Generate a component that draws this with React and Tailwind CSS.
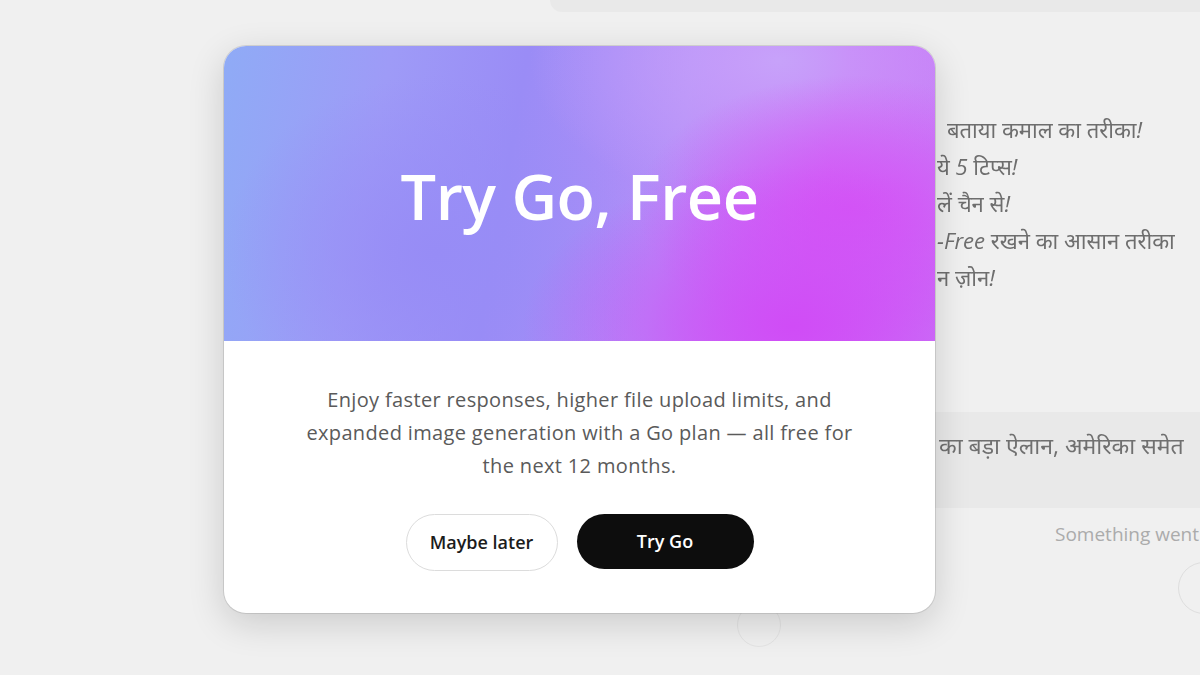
import { useState } from 'react';

const font = { fontFamily: '"Open Sans", "Noto Sans", sans-serif' };

const headlines = [
  { text: 'बताया कमाल का तरीका!', pad: 'pl-[12px]' },
  { text: 'ये 5 टिप्स!', pad: 'pl-[2px]' },
  { text: 'लें चैन से!', pad: 'pl-[2px]' },
  { text: '-Free रखने का आसान तरीका', pad: 'pl-[2px]' },
  { text: 'न ज़ोन!', pad: 'pl-[2px]' },
];

function BackgroundPage() {
  return (
    <div className="flex h-full w-full flex-col">
      <div className="ml-[550px] h-[12px] rounded-bl-[14px] bg-[#e9e9e9]" />
      <div className="flex flex-1">
        <div className="w-[935px] shrink-0">
          <div className="ml-[737px] mt-[591px] h-[44px] w-[44px] rounded-full border border-[#e4e4e4]" />
        </div>
        <div className="flex flex-1 flex-col">
          <div className="mt-[103px] flex flex-col gap-[8px] italic text-[#6e6e6e] text-[22px] leading-[29px] blur-[0.4px]" style={font}>
            {headlines.map((h) => (
              <div key={h.text} className={`whitespace-nowrap ${h.pad}`}>{h.text}</div>
            ))}
          </div>
          <div className="mt-[120px] flex h-[96px] items-start bg-[#e9e9e9] pl-[4px] pt-[16px] text-[23px] text-[#707070] whitespace-nowrap blur-[0.4px]" style={font}>
            का बड़ा ऐलान, अमेरिका समेत
          </div>
          <div className="mt-[12px] pl-[120px] text-[19px] text-[#ababab] whitespace-nowrap" style={font}>
            Something went
          </div>
          <div className="ml-[243px] mt-[13px] h-[52px] w-[52px] rounded-full border border-[#dedede]" />
        </div>
      </div>
    </div>
  );
}

function PromoModal({ onClose }) {
  return (
    <div className="absolute left-[224px] top-[46px] flex h-[567px] w-[711px] flex-col overflow-hidden rounded-[22px] bg-white shadow-[0_10px_36px_rgba(0,0,0,0.16)] ring-1 ring-black/10">
      <div className="flex h-[295px] items-center justify-center bg-[radial-gradient(ellipse_38%_55%_at_80%_95%,#d04cf6_0%,rgba(208,76,246,0)_100%),radial-gradient(ellipse_30%_45%_at_88%_55%,#d455f6_0%,rgba(212,85,246,0)_100%),radial-gradient(ellipse_35%_50%_at_78%_5%,#c7a2fa_0%,rgba(199,162,250,0)_100%),radial-gradient(ellipse_30%_60%_at_30%_70%,#978cf6_0%,rgba(151,140,246,0)_100%),linear-gradient(100deg,#8fabf6_0%,#9e9bf7_22%,#9a8cf6_40%,#b48ef8_62%,#cd6af6_82%,#c67cf7_100%)]">
        <h1 className="pt-[6px] text-[63px] font-semibold tracking-[-0.5px] text-white" style={font}>
          Try Go, Free
        </h1>
      </div>
      <div className="flex flex-1 flex-col items-center pt-[42px]">
        <p className="text-center text-[20px] leading-[33px] tracking-[0.35px] text-[#5a5a5a]" style={font}>
          Enjoy faster responses, higher file upload limits, and
          <br />
          expanded image generation with a Go plan — all free for
          <br />
          the next 12 months.
        </p>
        <div className="mt-[32px] flex gap-[19px]" style={font}>
          <button
            onClick={onClose}
            className="h-[57px] w-[152px] rounded-full border border-[#dcdcdc] bg-white text-[18px] font-semibold text-[#1c1c1c]"
          >
            Maybe later
          </button>
          <button className="h-[55px] w-[177px] rounded-full bg-[#0d0d0d] text-[18px] font-semibold text-white">
            Try Go
          </button>
        </div>
      </div>
    </div>
  );
}

export default function App() {
  const [open, setOpen] = useState(true);

  return (
    <div className="relative h-[675px] w-[1200px] overflow-hidden bg-[#f0f0f0]">
      <BackgroundPage />
      {open ? <PromoModal onClose={() => setOpen(false)} /> : null}
    </div>
  );
}
